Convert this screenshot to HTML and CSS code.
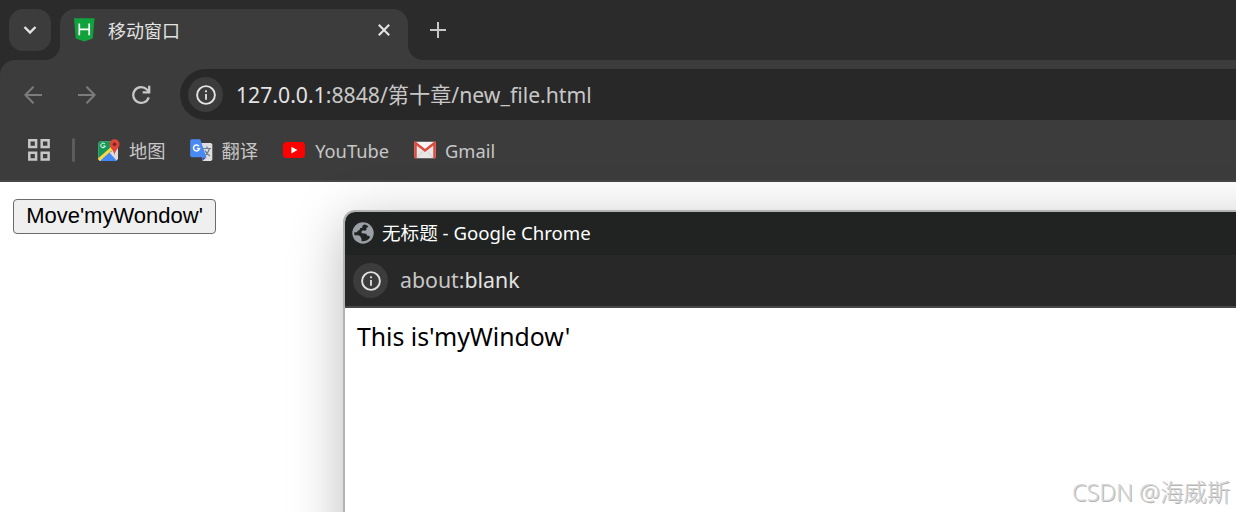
FILE: index.html
```html
<!DOCTYPE html>
<html lang="zh-CN">
<head>
    <meta charset="UTF-8">
    <title>移动窗口</title>
    <link rel="stylesheet" href="styles.css">
</head>
<body>
    <div class="tab-strip">
        <div class="tab-search">
            <svg width="14" height="10" viewBox="0 0 14 10"><path d="M1.500 2l5.500 5.500L12.500 2" fill="none" stroke="#e3e3e3" stroke-width="2.400"/></svg>
        </div>
        <div class="tab">
            <svg class="favicon" width="21" height="24" viewBox="0 0 21 24">
                <path d="M0 .3h20.500l-1.700 20.200-8.600 3.100-8.500-3.100z" fill="#10a33d"/>
                <path d="M5.300 5.500v11.700M15.200 5.500v11.700M5.300 11.300h9.900" stroke="#fff" stroke-width="1.700"/>
            </svg>
            <span class="tab-title">移动窗口</span>
            <svg class="tab-close" width="12" height="12" viewBox="0 0 12 12"><path d="M.8.8l10.400 10.400M11.200.8L.8 11.200" stroke="#e3e3e3" stroke-width="2.100"/></svg>
        </div>
        <svg class="new-tab" width="16" height="16" viewBox="0 0 16 16"><path d="M8 0v16M0 8h16" stroke="#c7c7c7" stroke-width="2"/></svg>
    </div>

    <div class="toolbar">
        <svg class="nav" width="18" height="18" viewBox="0 0 18 18"><path d="M9.500.8L1.300 9l8.200 8.200M1.300 9H18" fill="none" stroke="#7c7c7c" stroke-width="2"/></svg>
        <svg class="nav" width="18" height="18" viewBox="0 0 18 18"><path d="M8.500.8L16.700 9l-8.200 8.200M16.700 9H0" fill="none" stroke="#7c7c7c" stroke-width="2"/></svg>
        <svg class="nav" width="19" height="20" viewBox="0 0 19 20"><path d="M16.700 12.300A7.900 7.900 0 1 1 14.900 4.500L17.200 6.800M17.200.8v6.500h-6.500" fill="none" stroke="#c7c7c7" stroke-width="2.300"/></svg>
        <div class="omnibox">
            <div class="site-info">
                <svg width="20" height="20" viewBox="0 0 20 20"><circle cx="10" cy="10" r="8.900" fill="none" stroke="#e3e3e3" stroke-width="1.900"/><path d="M10 9v5.700M10 5.200v2" stroke="#e3e3e3" stroke-width="1.800"/></svg>
            </div>
            <div class="url"><span class="host">127.0.0.1</span><span class="port">:8848/第十章/</span><span class="file">new_file.html</span></div>
        </div>
    </div>

    <div class="bookmarks">
        <svg class="apps" width="22" height="22" viewBox="0 0 22 22"><path d="M1.300 1.300h6.800v6.800H1.300zM13.700 1.300h6.900v6.800h-6.900zM1.300 13.700h6.800v6.900H1.300zM13.700 13.700h6.900v6.900h-6.900z" fill="none" stroke="#c7c7c7" stroke-width="2.500"/></svg>
        <div class="divider"></div>
        <div class="bookmark maps">
            <svg width="22" height="23" viewBox="0 0 22 23">
                <path d="M2 2.200h13l5 6V20l-2 2H2L.3 20V4z" fill="#dcdcdc"/>
                <path d="M2 2.200h12L12 9l2 3L1 21 .3 20V4z" fill="#159957"/>
                <path d="M2 22l8.500-9.500L19 22z" fill="#4387f4"/>
                <path d="M.7 20.800L13.700 9.500" stroke="#fcd54a" stroke-width="3"/>
                <path d="M7 5.200A2.300 2.300 0 1 0 7.300 7H5.200" fill="none" stroke="#fff" stroke-width="1"/>
                <path d="M16.500.2a5 5 0 0 0-5 5c0 3.800 4.300 5.300 5 11 .7-5.700 5-7.200 5-11a5 5 0 0 0-5-5z" fill="#df4439"/>
                <circle cx="16.500" cy="5.200" r="1.800" fill="#7b221d"/>
            </svg>
            <span>地图</span>
        </div>
        <div class="bookmark translate">
            <svg width="23" height="23" viewBox="0 0 23 23">
                <path d="M11 4h10l1.300 1.300v15.400L21 22h-8.500z" fill="#dedede"/>
                <path d="M13 9.500h8M17 7.500v2M19.500 9.500c-1 4-3 6-5 7.500M15 11.500c1 2.500 3 4.500 5 5.500" fill="none" stroke="#6a7d86" stroke-width="1.200"/>
                <path d="M12.200 18.200h4.200L12.500 22z" fill="#3b4cb3"/>
                <path d="M1.500.2h8.700l6.200 18H1.500L.2 17V1.500z" fill="#4a8af4"/>
                <path d="M9 7.200A3 3 0 1 0 9.500 9.500H6.800" fill="none" stroke="#fff" stroke-width="1.500"/>
            </svg>
            <span>翻译</span>
        </div>
        <div class="bookmark youtube">
            <svg width="22" height="16" viewBox="0 0 22 16"><rect width="22" height="16" rx="3.500" fill="#f00"/><path d="M8.400 4.700l6 3.300-6 3.400z" fill="#fff"/></svg>
            <span>YouTube</span>
        </div>
        <div class="bookmark gmail">
            <svg width="22" height="18" viewBox="0 0 22 18">
                <rect x=".3" y=".7" width="21.400" height="16.600" rx="1.500" fill="#e7e7e7"/>
                <path d="M3 17l5.500-6.500M19 17l-5.500-6.500" stroke="#cfcfcf" stroke-width="1"/>
                <path d="M2 1l9 7.500L20 1z" fill="#f5f5f5"/>
                <path d="M1.500 17.300V2l9.500 7.400L20.500 2v15.300" fill="none" stroke="#dd4b3f" stroke-width="2.500"/>
            </svg>
            <span>Gmail</span>
        </div>
    </div>

    <div class="page">
        <button class="move-btn">Move'myWondow'</button>
    </div>

    <div class="popup">
        <div class="popup-title">
            <svg width="22" height="22" viewBox="0 0 22 22">
                <circle cx="11" cy="11" r="10.700" fill="#9aa0a6"/>
                <path d="M12.500 2.500C10.500 3.200 10 4.300 10.400 5.700 8.500 5.500 7.400 6.400 7.800 8c-1.800 0-2.400 1-2.700 2.300H2.300c-.2 1.200 0 2.200.4 3.200 1.600-.3 4.200-.4 5.300.6.9.8.6 1.900 1.500 2.300v2.800c3.800.4 6.900-1.200 8.500-3.900-.5-1.300-1.500-1.700-2.800-1.500-.3-1.700-1.300-2.500-3-2.400-1.300.1-2.700.1-2.800-1.100 0-1.300 1.400-1.900 2.700-1.700 1.600.3 2.400-.4 2.300-1.600-.1-1.300.6-2 2.100-2.100C15.700 3.700 14.200 2.800 12.500 2.500z" fill="#202322"/>
            </svg>
            <span>无标题 - Google Chrome</span>
        </div>
        <div class="popup-bar">
            <div class="site-info">
                <svg width="20" height="20" viewBox="0 0 20 20"><circle cx="10" cy="10" r="8.900" fill="none" stroke="#e3e3e3" stroke-width="1.900"/><path d="M10 9v5.700M10 5.200v2" stroke="#e3e3e3" stroke-width="1.800"/></svg>
            </div>
            <div class="about"><span class="scheme">about:</span><span class="host">blank</span></div>
        </div>
        <div class="popup-page"><span>This is'myWindow'</span></div>
    </div>

    <div class="watermark">CSDN @海威斯</div>
</body>
</html>
```
FILE: styles.css
```css
* {
    box-sizing: border-box;
}
html {
    overflow: hidden;
}
body {
    margin: 0;
    width: 1236px;
    height: 512px;
    overflow: hidden;
    position: relative;
    background: #fff;
    font-family: "Noto Sans", "Noto Sans CJK SC", sans-serif;
    white-space: nowrap;
}
svg {
    display: block;
    flex: none;
}

/* tabs */
.tab-strip {
    display: flex;
    height: 60px;
    padding: 9px 0 0 9px;
    background: #2b2b2b;
}
.tab-search {
    width: 42px;
    height: 42px;
    display: flex;
    align-items: center;
    justify-content: center;
    border-radius: 14px;
    background: #3c3c3c;
}
.tab {
    position: relative;
    display: flex;
    align-items: center;
    width: 348px;
    height: 51px;
    margin-left: 9px;
    padding: 0 18px 9px 14px;
    border-radius: 15px 15px 0 0;
    background: #3c3c3c;
}
.tab::before,
.tab::after {
    content: "";
    position: absolute;
    bottom: 0;
    width: 15px;
    height: 15px;
}
.tab::before {
    left: -15px;
    background: radial-gradient(circle at 0 0, transparent 14.5px, #3c3c3c 15.5px);
}
.tab::after {
    right: -15px;
    background: radial-gradient(circle at 100% 0, transparent 14.5px, #3c3c3c 15.5px);
}
.tab-title {
    margin-left: 13px;
    font-size: 18px;
    color: #e3e3e3;
}
.tab-close {
    margin-left: auto;
}
.new-tab {
    margin: 13px 0 0 22px;
}

/* toolbar */
.toolbar {
    display: flex;
    align-items: center;
    height: 60px;
    padding-left: 24px;
    border-top-left-radius: 15px;
    background: #3c3c3c;
    box-shadow: -15px -15px 0 #2b2b2b;
    clip-path: inset(0);
}
.nav {
    margin: 9px 36px 0 0;
}
.omnibox {
    flex: 1;
    display: flex;
    align-items: center;
    align-self: flex-end;
    height: 51px;
    margin-left: -7px;
    padding-left: 8px;
    border-radius: 26px 0 0 26px;
    background: #282828;
}
.site-info {
    flex: none;
    display: flex;
    align-items: center;
    justify-content: center;
    width: 35px;
    height: 35px;
    border-radius: 50%;
    background: #3c3c3c;
}
.url {
    margin-left: 13px;
    padding-bottom: 3px;
    font-size: 21.2px;
    color: #c7c7c7;
}
.host {
    color: #e3e3e3;
}

/* bookmarks */
.bookmarks {
    display: flex;
    align-items: center;
    height: 62px;
    padding-left: 28px;
    border-bottom: 2px solid #474747;
    background: #3c3c3c;
    font-size: 18.3px;
    color: #c7c7c7;
}
.divider {
    width: 3px;
    height: 24px;
    margin-left: 22px;
    border-radius: 2px;
    background: #5c5c5c;
}
.bookmark {
    display: flex;
    align-items: center;
}
.maps {
    margin-left: 23px;
    gap: 9px;
}
.translate {
    margin-left: 24px;
    gap: 9px;
}
.youtube {
    margin-left: 25px;
    gap: 10px;
}
.gmail {
    margin-left: 25px;
    gap: 9px;
}

.page {
    padding: 17px 0 0 13px;
}
.move-btn {
    width: 203px;
    height: 35px;
    padding: 0 0 2px;
    border: 1px solid #6b6b6b;
    border-radius: 4px;
    background: #efefef;
    font: 22px "Liberation Sans", Arial, sans-serif;
    color: #000;
}

/* popup window */
.popup {
    position: absolute;
    left: 343px;
    top: 210px;
    width: 1000px;
    height: 420px;
    overflow: hidden;
    border: 2px solid #b3b3b3;
    border-radius: 12px;
    background: #fff;
    box-shadow: 0 12px 54px rgba(0, 0, 0, .27);
}
.popup-title {
    display: flex;
    align-items: center;
    gap: 8px;
    height: 43px;
    padding: 0 0 2px 7px;
    background: #202322;
    font-size: 18.6px;
    color: #fff;
}
.popup-title span {
    padding-bottom: 2px;
}
.popup-bar {
    display: flex;
    align-items: center;
    height: 53px;
    padding-left: 8px;
    border-bottom: 2px solid #474747;
    background: #282828;
}
.about {
    margin-left: 12px;
    padding-bottom: 2px;
    font-size: 21.3px;
    color: #c7c7c7;
}
.popup-page {
    padding: 11px 12px;
    font-size: 24.8px;
    line-height: 34px;
    color: #000;
}

.watermark {
    position: absolute;
    left: 1072px;
    top: 475px;
    font-size: 23.4px;
    font-weight: 300;
    line-height: 34px;
    color: #d6d6d6;
    text-shadow: 1px 1px 0 #b4b4b4;
}
```
